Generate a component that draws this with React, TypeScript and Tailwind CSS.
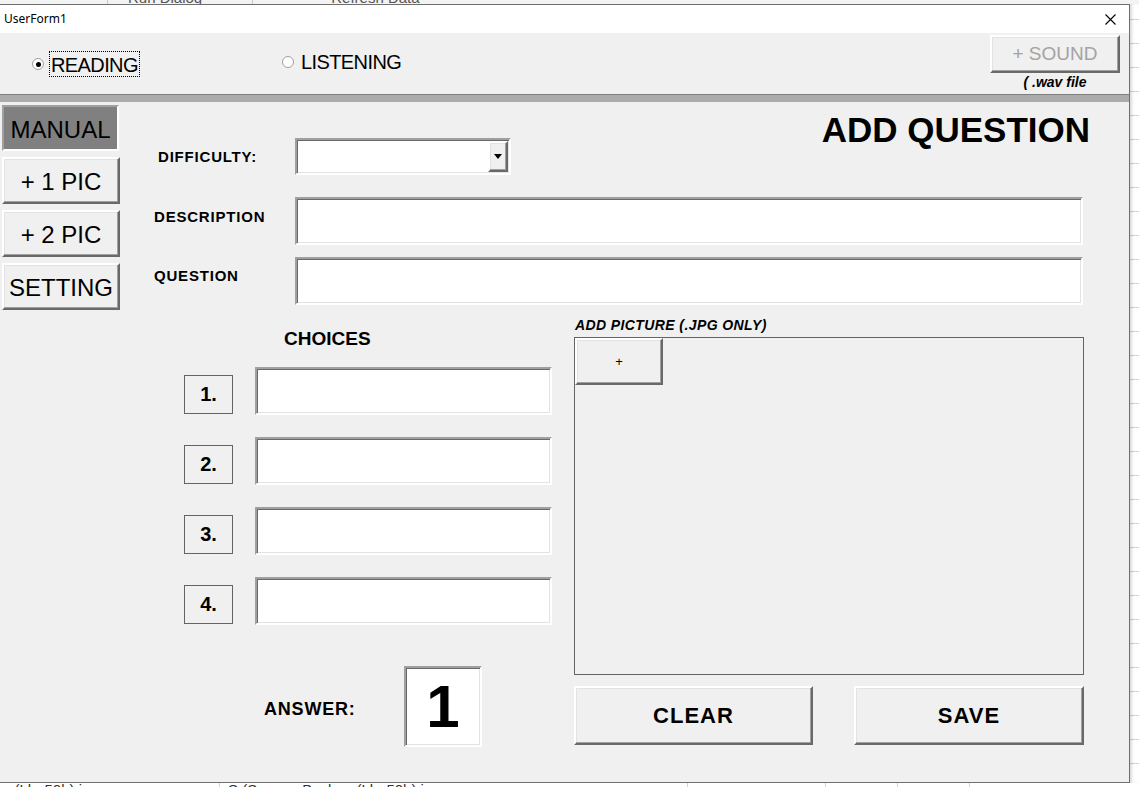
const raised =
  'border-2 border-t-white border-l-white border-r-[#696969] border-b-[#696969] shadow-[inset_-1px_-1px_0_#a0a0a0,inset_1px_1px_0_#e3e3e3] bg-[#f0f0f0]'
const sunken =
  'border-2 border-t-[#a0a0a0] border-l-[#a0a0a0] border-r-white border-b-white shadow-[inset_1px_1px_0_#696969,inset_-1px_-1px_0_#e3e3e3] bg-white'

const tabs = ['+ 1 PIC', '+ 2 PIC', 'SETTING']
const choices = ['1.', '2.', '3.', '4.']

function Radio({ checked }: { checked?: boolean }) {
  return (
    <span className="flex h-[12px] w-[12px] items-center justify-center rounded-full border border-[#a0a0a0] bg-white">
      {checked && <span className="h-[5px] w-[5px] rounded-full bg-black" />}
    </span>
  )
}

function Header() {
  return (
    <div className="flex h-[61px] items-start">
      <div className="flex w-[282px] items-center pl-[32px] pt-[18px]">
        <Radio checked />
        <span className="ml-[5px] flex h-[26px] items-center border border-dotted border-black px-[1px] pt-[2px] text-[20px] leading-[24px] tracking-[-0.6px] text-black">
          READING
        </span>
      </div>
      <div className="flex items-center pt-[17px]">
        <Radio />
        <span className="ml-[7px] text-[20px] leading-[24px] tracking-[-0.6px] text-black">LISTENING</span>
      </div>
      <div className="ml-auto mr-[9px] flex flex-col items-center pt-[2px]">
        <div className={`${raised} flex h-[38px] w-[130px] items-center justify-center text-[19px] text-[#a3a3a3]`}>
          + SOUND
        </div>
        <span className="mt-[1px] text-[14px] font-bold italic leading-[16px] text-black">( .wav file</span>
      </div>
    </div>
  )
}

function SideTabs() {
  return (
    <div className="flex w-[121px] shrink-0 flex-col gap-[6px] pl-[2px] pt-[3px]">
      <div className="flex h-[46px] w-[117px] items-center justify-center border-2 border-t-[#a0a0a0] border-l-[#a0a0a0] border-r-white border-b-white bg-[#808080] pt-[3px] text-[24px] text-black">
        MANUAL
      </div>
      {tabs.map((t) => (
        <div key={t} className={`${raised} flex h-[47px] w-[118px] items-center justify-center pt-[2px] text-[24px] text-black`}>
          {t}
        </div>
      ))}
    </div>
  )
}

function Label({ children, className = '' }: { children: React.ReactNode; className?: string }) {
  return <span className={`text-[15px] font-bold leading-[17px] tracking-[0.8px] text-black ${className}`}>{children}</span>
}

function FormTop() {
  return (
    <>
      <div className="flex items-start pr-[39px]">
        <div className="mt-[26px] flex items-center">
          <div className="w-[141px] pl-[4px]">
            <Label>DIFFICULTY:</Label>
          </div>
          <div className={`${sunken} flex h-[37px] w-[216px] justify-end p-[1px]`}>
            <div className={`${raised} flex h-full w-[20px] items-center justify-center`}>
              <svg width="8" height="5" viewBox="0 0 8 5">
                <path d="M0 0h8L4 5z" fill="#000" />
              </svg>
            </div>
          </div>
        </div>
        <h1 className="ml-auto text-[35px] font-bold leading-[35px] text-black">ADD QUESTION</h1>
      </div>

      <div className="mt-[22px] flex items-start">
        <div className="w-[141px] pt-[8px]">
          <Label>DESCRIPTION</Label>
        </div>
        <div className={`${sunken} h-[48px] w-[788px]`} />
      </div>

      <div className="mt-[12px] flex items-start">
        <div className="w-[141px] pt-[7px]">
          <Label>QUESTION</Label>
        </div>
        <div className={`${sunken} h-[48px] w-[788px]`} />
      </div>
    </>
  )
}

function Choices() {
  return (
    <div className="flex w-[420px] shrink-0 flex-col">
      <div className="mt-[23px] pl-[130px] text-[19px] font-bold leading-[22px] text-black">CHOICES</div>
      <div className="mt-[17px] flex flex-col gap-[22px]">
        {choices.map((c) => (
          <div key={c} className="flex items-end pl-[30px]">
            <div className="mb-[1px] flex h-[39px] w-[49px] items-center justify-center border border-[#646464] pb-[2px] text-[20px] font-bold text-black">
              {c}
            </div>
            <div className={`${sunken} ml-[22px] h-[48px] w-[297px]`} />
          </div>
        ))}
      </div>
      <div className="mt-[41px] flex items-center pl-[110px]">
        <span className="w-[140px] pt-[6px] text-[18px] font-bold tracking-[0.8px] text-black">ANSWER:</span>
        <div className={`${sunken} flex h-[81px] w-[78px] items-center justify-center text-[60px] font-bold leading-none text-black`}>
          1
        </div>
      </div>
    </div>
  )
}

function Picture() {
  return (
    <div className="flex w-[510px] flex-col">
      <span className="mt-[12px] pl-[1px] text-[14px] font-bold italic leading-[16px] tracking-[0.4px] text-black">
        ADD PICTURE (.JPG ONLY)
      </span>
      <div className="mt-[4px] h-[338px] border border-[#646464]">
        <div className={`${raised} flex h-[47px] w-[88px] items-center justify-center text-[13px] text-black`}>+</div>
      </div>
      <div className="mt-[11px] flex justify-between">
        <div className={`${raised} flex h-[59px] w-[239px] items-center justify-center text-[22px] font-bold tracking-[1px] text-black`}>
          CLEAR
        </div>
        <div className={`${raised} flex h-[59px] w-[230px] items-center justify-center text-[22px] font-bold tracking-[1px] text-black`}>
          SAVE
        </div>
      </div>
    </div>
  )
}

export default function App() {
  return (
    <div className="flex h-[787px] w-[1139px] flex-col overflow-hidden bg-white font-['Liberation_Sans',Arial,sans-serif]">
      {/* excel ribbon peeking above the form */}
      <div className="flex h-[4px] shrink-0 overflow-hidden bg-[#f3f3f3] text-[15px] leading-[18px] text-[#555]">
        <span className="ml-[107px] h-full border-l border-[#c8c8c8]" />
        <span className="-mt-[11px] ml-[20px]">Run Dialog</span>
        <span className="ml-[50px] h-full border-l border-[#c8c8c8]" />
        <span className="-mt-[11px] ml-[78px]">Refresh Data</span>
      </div>

      <div className="flex h-[779px] shrink-0">
        <div className="flex w-[1130px] shrink-0 flex-col border-t border-r border-b border-[#6e6e6e] bg-[#f0f0f0]">
          <div className="flex h-[28px] shrink-0 items-center justify-between bg-white pl-[4px] pr-[13px]">
            <span className="font-['Noto_Sans',sans-serif] text-[12px] text-black">UserForm1</span>
            <svg width="11" height="11" viewBox="0 0 11 11">
              <path d="M0.5 0.5l10 10M10.5 0.5l-10 10" stroke="#000" strokeWidth="1.1" />
            </svg>
          </div>

          <Header />
          <div className="h-[8px] shrink-0 border-t border-[#7f7f7f] bg-[#ababab]" />

          <div className="flex flex-1">
            <SideTabs />
            <div className="flex flex-1 flex-col pl-[33px] pt-[10px]">
              <FormTop />
              <div className="flex">
                <Choices />
                <Picture />
              </div>
            </div>
          </div>
        </div>
        <div className="flex-1 bg-[repeating-linear-gradient(to_bottom,#fff_0,#fff_15px,#d4d4d4_15px,#d4d4d4_16px,#fff_16px,#fff_24px)] shadow-[inset_3px_0_3px_-1px_rgba(0,0,0,0.15)]" />
      </div>

      {/* excel cells peeking below the form */}
      <div className="flex h-[4px] overflow-hidden text-[15px] leading-[18px] text-[#333]">
        <span className="-mt-[2px] w-[220px] shrink-0 border-r border-[#d4d4d4] pl-[2px]">p (Lb. 50h).jpg</span>
        <span className="-mt-[2px] w-[468px] shrink-0 border-r border-[#d4d4d4] pl-[8px]">S (Snapes Backup (Lb. 50h).jpg</span>
        <span className="w-[138px] shrink-0 border-r border-[#d4d4d4]" />
        <span className="w-[72px] shrink-0 border-r border-[#d4d4d4]" />
        <span className="w-[72px] shrink-0 border-r border-[#d4d4d4]" />
      </div>
    </div>
  )
}
